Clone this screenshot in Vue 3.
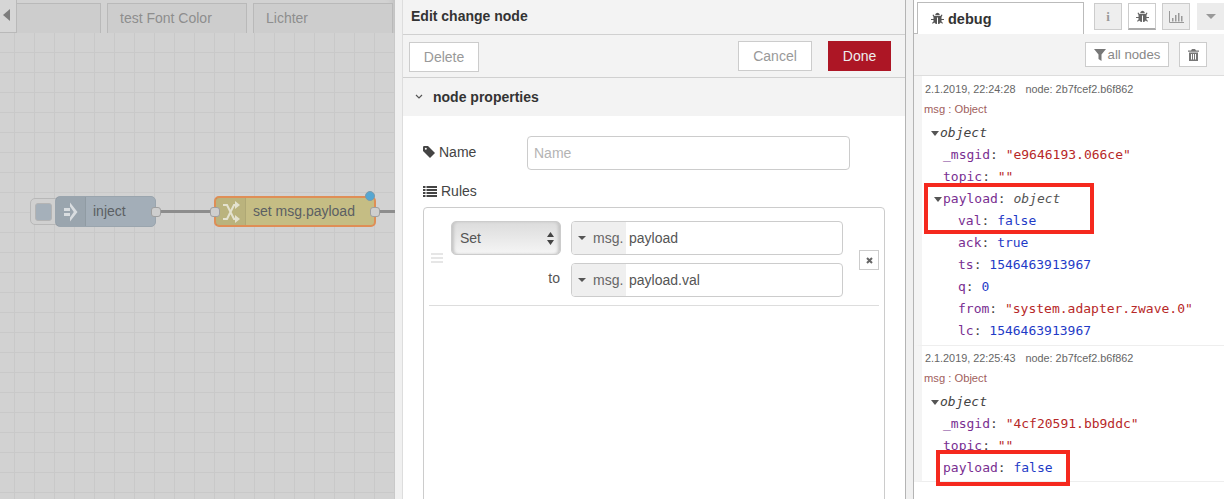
<script setup>
const msgOne = [
  { k: '_msgid', v: '"e9646193.066ce"', c: 'str', d: 1 },
  { k: 'topic', v: '""', c: 'str', d: 1 },
  { k: 'payload', v: 'object', c: 'type', d: 1, open: true },
  { k: 'val', v: 'false', c: 'val', d: 2 },
  { k: 'ack', v: 'true', c: 'val', d: 2 },
  { k: 'ts', v: '1546463913967', c: 'val', d: 2 },
  { k: 'q', v: '0', c: 'val', d: 2 },
  { k: 'from', v: '"system.adapter.zwave.0"', c: 'str', d: 2 },
  { k: 'lc', v: '1546463913967', c: 'val', d: 2 }
]
const msgTwo = [
  { k: '_msgid', v: '"4cf20591.bb9ddc"', c: 'str', d: 1 },
  { k: 'topic', v: '""', c: 'str', d: 1 },
  { k: 'payload', v: 'false', c: 'val', d: 1 }
]
const messages = [
  { time: '2.1.2019, 22:24:28', rows: msgOne },
  { time: '2.1.2019, 22:25:43', rows: msgTwo }
]
</script>

<template>
  <div class="app">
    <section class="canvas">
      <div class="tabs">
        <div class="scroll-btn"><span class="tri"></span></div>
        <div class="tab first"></div>
        <div class="tab second">test Font Color</div>
        <div class="tab third">Lichter</div>
      </div>
      <div class="grid">
        <div class="wire w1"></div>
        <div class="wire w2"></div>
        <div class="inject-btn"><span></span></div>
        <div class="node inject">
          <div class="node-icon">
            <svg width="14" height="22" viewBox="0 0 14 22"><path d="M0 7h6v3H0zM0 12h6v3H0z" fill="#d9dde0"/><path d="M6 1.500L13.500 11 6 20.500v-4L9.800 11 6 5.500z" fill="#d9dde0"/></svg>
          </div>
          <span>inject</span>
          <i class="port right"></i>
        </div>
        <div class="node change">
          <div class="node-icon">
            <svg width="18" height="24" viewBox="0 0 18 24"><path d="M1 5h4l7 14h2M1 19h4l7-14h2" fill="none" stroke="#e4e2cf" stroke-width="2"/><path d="M13 1l5 4-5 4zM13 15l5 4-5 4z" fill="#e4e2cf"/></svg>
          </div>
          <span>set msg.payload</span>
          <i class="port left"></i>
          <i class="port right"></i>
          <b class="dot"></b>
        </div>
      </div>
    </section>

    <section class="tray">
      <h1 class="tray-title">Edit change node</h1>
      <div class="toolbar">
        <button class="btn delete">Delete</button>
        <div class="toolbar-right">
          <button class="btn cancel">Cancel</button>
          <button class="btn done">Done</button>
        </div>
      </div>
      <div class="section-head">
        <svg width="8" height="6" viewBox="0 0 8 6"><path d="M1 1l3 3 3-3" fill="none" stroke="#555" stroke-width="1.2"/></svg>
        <span>node properties</span>
      </div>
      <div class="form">
        <div class="name-row">
          <label>
            <svg width="12" height="12" viewBox="0 0 12 12"><path d="M0 1.200Q0 0 1.200 0H5l7 7-5 5-7-7z" fill="#444"/><circle cx="2.800" cy="2.800" r="1" fill="#fff"/></svg>
            Name
          </label>
          <div class="input placeholder">Name</div>
        </div>
        <div class="rules-label">
          <svg width="14" height="11" viewBox="0 0 14 11"><path d="M0 0h2.500v2H0zM3.500 0H14v2H3.500zM0 3h2.500v2H0zM3.500 3H14v2H3.500zM0 6h2.500v2H0zM3.500 6H14v2H3.500zM0 9h2.500v2H0zM3.500 9H14v2H3.500z" fill="#444"/></svg>
          Rules
        </div>
        <div class="rules">
          <div class="rule">
            <div class="handle"><i></i><i></i><i></i></div>
            <div class="rule-grid">
              <div class="select">
                <span>Set</span>
                <svg width="7" height="13" viewBox="0 0 7 13"><path d="M3.500 0L7 5H0zM3.500 13L0 8h7z" fill="#444"/></svg>
              </div>
              <div class="typed">
                <div class="prefix"><span class="caret"></span>msg.</div>
                <div class="value">payload</div>
              </div>
              <div class="to">to</div>
              <div class="typed">
                <div class="prefix"><span class="caret"></span>msg.</div>
                <div class="value">payload.val</div>
              </div>
            </div>
            <div class="remove">
              <svg width="7" height="7" viewBox="0 0 7 7"><path d="M1 1l5 5M6 1l-5 5" stroke="#666" stroke-width="2"/></svg>
            </div>
          </div>
        </div>
      </div>
    </section>

    <aside class="sidebar">
      <div class="side-tabs">
        <div class="side-tab">
          <svg class="bug" width="13" height="13" viewBox="0 0 13 13"><path d="M3.500 4h6l1-1.500 1 .6L10.500 5v2H13v1h-2.500v1.500L12 11l-.8.800-1.400-1.400Q8.500 12 7 12V5.500H6V12q-1.500 0-2.800-1.600L1.800 11.800 1 11l1.500-1.500V8H0V7h2.500V5L1.500 3.100l1-.6zM4 3.300Q4.500.8 6.500.8T9 3.300z" fill="#555"/></svg>
          debug
        </div>
        <div class="icon-tabs">
          <div class="icon-tab"><span class="info">i</span></div>
          <div class="icon-tab on">
            <svg width="13" height="13" viewBox="0 0 13 13"><path d="M3.500 4h6l1-1.500 1 .6L10.500 5v2H13v1h-2.500v1.500L12 11l-.8.800-1.400-1.400Q8.500 12 7 12V5.500H6V12q-1.500 0-2.800-1.600L1.800 11.800 1 11l1.500-1.500V8H0V7h2.500V5L1.500 3.100l1-.6zM4 3.300Q4.500.8 6.500.8T9 3.300z" fill="#666"/></svg>
          </div>
          <div class="icon-tab">
            <svg width="15" height="12" viewBox="0 0 15 12"><path d="M.5 0v11.500H15" fill="none" stroke="#999"/><path d="M3 7h1.500v3.500H3zM6 4h1.500v6.500H6zM9 2h1.500v8.500H9zM12 5h1.500v5.500H12z" fill="#999"/></svg>
          </div>
          <div class="icon-tab menu"><span class="caret big"></span></div>
        </div>
      </div>
      <div class="side-tools">
        <div class="tool filter">
          <svg width="12" height="12" viewBox="0 0 12 12"><path d="M0 0h12L7.500 5.500V12L4.500 10V5.500z" fill="#777"/></svg>
          all nodes
        </div>
        <div class="tool trash">
          <svg width="11" height="12" viewBox="0 0 11 12"><path d="M4 0h3l1 1.500h3v1.200H0V1.500h3zM1 3.500h9V12H1zM3 5v5.500h1V5zM5 5v5.500h1V5zM7 5v5.500h1V5z" fill="#777" fill-rule="evenodd"/></svg>
        </div>
      </div>
      <div class="log">
        <article v-for="(m, i) in messages" :key="i" class="msg">
          <div class="meta"><span>{{ m.time }}</span><span>node: 2b7fcef2.b6f862</span></div>
          <div class="topic">msg : Object</div>
          <div class="tree">
            <div class="row root"><span class="arrow"></span><em>object</em></div>
            <div v-for="r in m.rows" :key="r.k" class="row" :class="'d' + r.d">
              <span v-if="r.open" class="arrow"></span>
              <span class="key">{{ r.k }}</span><span class="colon">: </span><span :class="r.c">{{ r.v }}</span>
            </div>
          </div>
        </article>
      </div>
      <div class="mark mark-a"></div>
      <div class="mark mark-b"></div>
    </aside>
  </div>
</template>

<style>
html, body { margin: 0; overflow: hidden; }
</style>

<style scoped>
.app { width: 1224px; height: 499px; display: flex; overflow: hidden; position: relative; background: #f0f0f0; font-family: "Liberation Sans", Arial, sans-serif; color: #444; }
.canvas { width: 395px; flex: none; background: #d2d2d2; display: flex; flex-direction: column; box-shadow: inset -8px 0 8px -8px rgba(0,0,0,.15); }
.tabs { height: 33px; flex: none; display: flex; align-items: flex-end; position: relative; font-size: 14px; color: #8e8e8e; }
.scroll-btn { width: 17px; height: 33px; flex: none; box-sizing: border-box; background: #d6d6d6; border: 1px solid #b9b9b9; border-width: 0 1px 1px 0; display: flex; align-items: center; justify-content: flex-start; padding-left: 3px; }
.tri { border: 6px solid transparent; border-right: 7px solid #7d7d7d; border-left: 0; margin-top: -3px; }
.tab { box-sizing: border-box; height: 30px; background: #cdcdcd; border: 1px solid #b9b9b9; border-bottom: 0; padding: 6px 0 0 12px; line-height: 17px; }
.first { width: 84px; border-left: 0; margin-right: 6px; }
.second { width: 140px; margin-right: 6px; }
.third { width: 140px; }
.grid { flex: 1; position: relative; background-color: #d2d2d2; background-image: linear-gradient(#c9c9c9 1px, transparent 1px), linear-gradient(90deg, #c9c9c9 1px, transparent 1px); background-size: 20px 20px; background-position: 14px 19px; }
.wire { position: absolute; top: 177px; height: 3px; background: #8d8d8d; }
.w1 { left: 155px; width: 60px; }
.w2 { left: 375px; width: 20px; }
.inject-btn { position: absolute; left: 30px; top: 165px; width: 30px; height: 27px; box-sizing: border-box; background: #d0d0d0; border: 1px solid #b8b8b8; border-radius: 5px; padding: 4px 0 0 4px; }
.inject-btn span { display: block; width: 17px; height: 18px; background: #a5b0ba; border: 1px solid #b4b4b4; border-radius: 3px; box-sizing: border-box; }
.node { position: absolute; box-sizing: border-box; height: 31px; top: 163px; border-radius: 5px; font-size: 14px; color: #5b5f63; display: flex; align-items: center; }
.node > span { padding-bottom: 2px; }
.inject { left: 55px; width: 101px; background: #a3aeb8; border: 1px solid #9aa5ae; }
.inject > span { margin-left: 7px; }
.change { left: 214px; width: 162px; background: #c5bd84; border: 2px solid #df8e56; }
.change > span { margin-left: 7px; }
.node-icon { height: 100%; display: flex; align-items: center; justify-content: center; width: 29px; background: rgba(0,0,0,.05); border-right: 1px solid rgba(0,0,0,.06); flex: none; }
.port { position: absolute; width: 10px; height: 10px; box-sizing: border-box; background: #cecece; border: 1px solid #9f9f9f; border-radius: 3px; top: 50%; margin-top: -5px; }
.port.right { right: -6px; }
.port.left { left: -6px; }
.dot { position: absolute; right: -1px; top: -7px; width: 10px; height: 10px; border-radius: 50%; background: #55a7d2; border: 1px solid #7d9aaa; box-sizing: border-box; }
.tray { width: 504px; flex: none; box-sizing: border-box; background: #fff; border-left: 1px solid #ddd; border-right: 1px solid #b4b4b4; margin: 0 7px; }
.tray-title { margin: 0; height: 35px; box-sizing: border-box; background: #f3f3f3; border-bottom: 1px solid #d0d0d0; font-size: 14px; font-weight: 700; line-height: 32px; padding-left: 8px; color: #333; }
.toolbar { height: 43px; box-sizing: border-box; background: #f3f3f3; border-bottom: 1px solid #d0d0d0; padding: 7px 14px 0 6px; display: flex; justify-content: space-between; }
.toolbar-right { display: flex; gap: 16px; margin-top: -1px; }
.btn { box-sizing: border-box; height: 30px; font: 14px "Liberation Sans", Arial, sans-serif; border: 1px solid #ccc; background: #fff; color: #999; padding: 0; }
.delete { width: 70px; }
.cancel { width: 74px; }
.done { width: 63px; background: #ad1625; border-color: #ad1625; color: #eee; }
.section-head { height: 38px; background: #f3f3f3; display: flex; align-items: center; font-size: 14px; font-weight: 700; color: #333; padding-left: 12px; gap: 10px; }
.form { padding: 20px 0 0 20px; font-size: 14px; background: #fff; }
.name-row { display: flex; align-items: center; }
.name-row label { width: 104px; display: flex; gap: 4px; align-items: center; margin-top: -2px; }
.input { width: 323px; height: 34px; box-sizing: border-box; border: 1px solid #ccc; border-radius: 4px; line-height: 32px; padding-left: 6px; }
.placeholder { color: #b4b4b4; }
.rules-label { margin-top: 12px; display: flex; align-items: center; gap: 4px; height: 18px; }
.rules { margin-top: 7px; width: 462px; height: 300px; box-sizing: border-box; border: 1px solid #ccc; border-radius: 4px; padding: 0 5px; }
.rule { height: 98px; border-bottom: 1px solid #ddd; position: relative; display: flex; box-sizing: border-box; }
.handle { position: absolute; left: 2px; top: 45px; display: flex; flex-direction: column; gap: 2px; }
.handle i { display: block; width: 12px; height: 2px; background: #e6e6e6; }
.rule-grid { display: grid; grid-template-columns: 110px 272px; column-gap: 10px; row-gap: 8px; margin: 13px 0 0 22px; align-self: flex-start; }
.select { height: 34px; box-sizing: border-box; border: 1px solid #ccc; border-radius: 5px; background: linear-gradient(#dcdcdc, #f5f5f5); box-shadow: inset 3px 0 3px -1px #c4c4c4, inset -3px 0 3px -1px #c4c4c4; display: flex; align-items: center; justify-content: space-between; padding: 0 6px 0 8px; color: #555; }
.typed { height: 34px; box-sizing: border-box; border: 1px solid #ccc; border-radius: 4px; display: flex; line-height: 32px; overflow: hidden; }
.prefix { width: 54px; flex: none; background: #efefef; color: #666; display: flex; align-items: center; box-sizing: border-box; padding-left: 6px; gap: 7px; }
.caret { border: 4px solid transparent; border-top: 4px solid #555; border-bottom: 0; width: 0; height: 0; display: inline-block; }
.value { padding-left: 3px; color: #555; }
.to { text-align: right; line-height: 30px; color: #555; padding-right: 1px; }
.remove { position: absolute; left: 430px; top: 42px; width: 20px; height: 20px; box-sizing: border-box; border: 1px solid #ccc; display: flex; align-items: center; justify-content: center; }
.sidebar { width: 310px; flex: none; border-left: 1px solid #b4b4b4; background: #fff; position: relative; display: flex; flex-direction: column; }
.side-tabs { height: 34px; flex: none; display: flex; font-size: 0; background: linear-gradient(#bbb, #bbb) 0 33px / 3px 1px no-repeat, #fff; }
.side-tab { width: 167px; height: 32px; margin: 2px 0 0 3px; box-sizing: border-box; background: #fff; border: 1px solid #bbb; border-bottom: 0; font-size: 14.500px; font-weight: 700; color: #333; display: flex; align-items: center; gap: 4px; padding-left: 13px; }
.icon-tabs { display: flex; gap: 6px; margin: 3px 0 0 10px; }
.icon-tab { width: 28px; height: 27px; box-sizing: border-box; border: 1px solid #ccc; background: #eee; display: flex; align-items: center; justify-content: center; }
.icon-tab.on { background: #fff; border-bottom: 2px solid #aaa; }
.icon-tab.menu { background: #ececec; border: 0; width: 27px; margin-left: 1px; }
.info { font: 700 13px "Liberation Serif", serif; color: #999; }
.caret.big { border-width: 5px; border-top-color: #999; border-top-style: solid; border-bottom: 0; }
.side-tools { height: 42px; flex: none; box-sizing: border-box; background: #f3f3f3; border-bottom: 1px solid #ddd; display: flex; justify-content: flex-end; gap: 10px; padding: 8px 17px 0 0; }
.tool { height: 25px; box-sizing: border-box; background: #fff; border: 1px solid #ccc; display: flex; align-items: center; justify-content: center; font-size: 13.200px; color: #888; gap: 2px; }
.filter { width: 84px; }
.trash { width: 28px; }
.log { flex: 1; overflow: hidden; }
.msg { border-left: 8px solid #f4f4f4; border-bottom: 1px solid #eee; height: 270px; box-sizing: border-box; padding-top: 5px; }
.msg + .msg { height: 136px; padding-top: 4px; }
.meta { font-size: 10.850px; color: #666; display: flex; gap: 10px; padding-left: 3px; height: 16px; line-height: 16px; }
.topic { font-size: 11.200px; color: #a0605c; padding-left: 2px; margin-top: 4px; height: 16px; line-height: 16px; }
.tree { font: 13px/22px "DejaVu Sans Mono", "Liberation Mono", monospace; margin-top: 5px; }
.row { height: 22px; white-space: pre; display: flex; align-items: center; }
.row.root { padding-left: 9px; color: #444; }
.d1 { padding-left: 21px; }
.d2 { padding-left: 36px; }
.arrow { border: 4px solid transparent; border-top: 5px solid #555; border-bottom: 0; width: 0; height: 0; margin-right: 1px; margin-left: -9px; }
.root .arrow { margin-left: 0; }
.key { color: #792e91; }
.colon { color: #444; }
.str { color: #b72828; }
.val { color: #1f3bc7; }
.type { color: #555; font-style: italic; }
.mark { position: absolute; border: 4px solid #f5291e; box-sizing: border-box; }
.mark-a { left: 10px; top: 183px; width: 170px; height: 51px; }
.mark-b { left: 22px; top: 450px; width: 134px; height: 36px; }
</style>
